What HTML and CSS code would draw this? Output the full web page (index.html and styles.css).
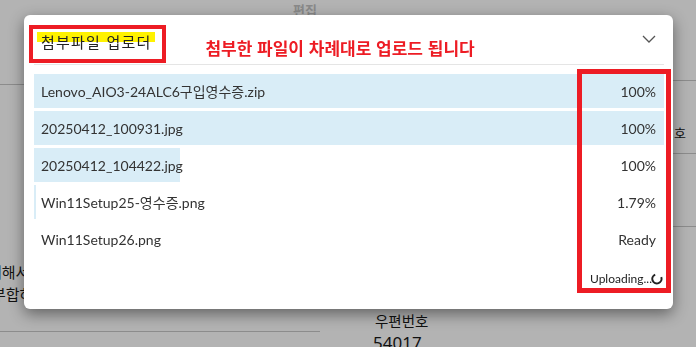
FILE: index.html
```html
<!DOCTYPE html>
<html lang="ko">
<head>
<meta charset="utf-8">
<title>첨부파일 업로더</title>
<link rel="stylesheet" href="styles.css">
</head>
<body>
<div class="page">
  <div class="col-left">
    <div class="edit-label">편집</div>
    <div class="rule rule-a"></div>
    <p class="para"><span class="l1">대해서 검토합니다</span><span class="l2">부합하는 경우</span></p>
    <div class="rule rule-b"></div>
  </div>
  <div class="col-right">
    <div class="bg-heading">구매 신청</div>
    <div class="rule rule-c"></div>
    <div class="phone-row">전화번호</div>
    <div class="rule rule-d"></div>
    <div class="rule rule-e"></div>
    <div class="zip-label">우편번호</div>
    <div class="zip-value">54017</div>
  </div>
</div>

<div class="modal">
  <div class="modal-header">
    <h4 class="modal-title"><span class="hl">첨부파일 업로더</span></h4>
    <span class="note">첨부한 파일이 차례대로 업로드 됩니다</span>
    <svg class="chevron" width="14" height="8" viewBox="0 0 14 8"><path d="M1 1 L7 7 L13 1" fill="none" stroke="#555" stroke-width="1.3"/></svg>
  </div>
  <div class="modal-body">
    <div class="row" style="--p:100%"><span class="name">Lenovo_AIO3-24ALC6구입영수증.zip</span><span class="status">100%</span></div>
    <div class="row" style="--p:100%"><span class="name">20250412_100931.jpg</span><span class="status">100%</span></div>
    <div class="row" style="--p:23.2%"><span class="name">20250412_104422.jpg</span><span class="status">100%</span></div>
    <div class="row" style="--p:0.32%"><span class="name">Win11Setup25-영수증.png</span><span class="status">1.79%</span></div>
    <div class="row" style="--p:0%"><span class="name">Win11Setup26.png</span><span class="status">Ready</span></div>
    <div class="row row-uploading" style="--p:0%"><span class="name"></span><span class="status uploading">Uploading...<svg class="spinner" width="12" height="12" viewBox="0 0 12 12"><path d="M4.2 1.6 A4.6 4.6 0 1 0 10.2 4.2" fill="none" stroke="#222" stroke-width="2"/></svg></span></div>
  </div>
  <div class="mark mark-title"></div>
  <div class="mark mark-status"></div>
</div>
</body>
</html>
```

FILE: styles.css
```css
html, body {
  margin: 0;
  padding: 0;
}
body {
  width: 696px;
  height: 347px;
  overflow: hidden;
  background: #b3b3b3;
  font-family: Lato, "Noto Sans CJK KR", sans-serif;
  color: #111;
}
.page {
  display: grid;
  grid-template-columns: 320px 53px 323px;
  height: 347px;
  overflow: hidden;
}
.col-left { grid-column: 1; }
.col-right { grid-column: 3; }

.rule { border-top: 1px solid #8c8c8c; height: 0; }

.edit-label {
  font-family: "Noto Sans CJK KR", sans-serif;
  font-size: 13px;
  font-weight: 700;
  line-height: 20px;
  color: #8a8a8a;
  text-align: right;
  padding-right: 3px;
}
.rule-a { margin-top: 64px; }
.para {
  margin: 176px 0 0 0;
  font-family: "Noto Sans CJK KR", sans-serif;
  font-size: 15px;
  line-height: 22px;
  white-space: nowrap;
}
.para span { display: block; }
.para .l1 { margin-left: -12px; }
.para .l2 { margin-left: -8px; }
.rule-b { margin-top: 26px; }

.bg-heading {
  margin-top: -28px;
  height: 30px;
  line-height: 30px;
  font-family: "Noto Sans CJK KR", sans-serif;
  font-size: 22px;
  font-weight: 700;
  white-space: nowrap;
}
.rule-c { margin-top: 78px; }
.phone-row {
  margin-top: 40px;
  height: 24px;
  line-height: 24px;
  font-family: "Noto Sans CJK KR", sans-serif;
  font-size: 13px;
  text-align: right;
  padding-right: 10px;
}
.rule-d { margin-top: 8px; }
.rule-e { margin-top: 72px; }
.zip-label {
  margin-top: 84px;
  padding-left: 2px;
  font-family: "Noto Sans CJK KR", sans-serif;
  font-size: 14.5px;
  line-height: 20px;
}
.zip-value {
  font-family: "Noto Sans", sans-serif;
  font-size: 17px;
  line-height: 24px;
}

/* modal */
.modal {
  position: fixed;
  left: 24px;
  top: 15px;
  width: 649px;
  height: 294px;
  box-sizing: border-box;
  padding: 0 9px 0 10px;
  background: #fff;
  border-radius: 6px;
  box-shadow: 0 5px 15px rgba(0, 0, 0, 0.45);
  color: #333;
}
.modal-header {
  display: flex;
  align-items: flex-start;
  height: 49px;
  border-bottom: 1px solid #e5e5e5;
}
.modal-title {
  margin: 17px 0 0 0;
  padding-left: 3px;
  font-family: "Noto Sans CJK KR", sans-serif;
  font-size: 15px;
  font-weight: 400;
  line-height: 20px;
  letter-spacing: 1.2px;
  color: #222;
}
.hl {
  padding: 0 4px 0 4px;
  background: linear-gradient(to bottom, transparent 1px, #fff200 1px, #fff200 11px, transparent 11px);
}
.note {
  margin: 23px 0 0 50px;
  font-family: "Noto Sans CJK KR", sans-serif;
  font-size: 17px;
  font-weight: 700;
  line-height: 20px;
  color: #ed1c24;
  white-space: nowrap;
}
.chevron {
  margin: 20px 8px 0 auto;
  display: block;
}
.modal-body {
  padding-top: 9px;
  display: flex;
  flex-direction: column;
  gap: 3px;
}
.row {
  height: 34px;
  display: flex;
  align-items: center;
  justify-content: space-between;
  padding: 0 8px 0 7px;
  font-size: 14px;
  color: #333;
  background: linear-gradient(to right, #d9edf7 var(--p), transparent var(--p));
}
.row-uploading { align-items: flex-start; padding-top: 12px; box-sizing: border-box; }
.uploading {
  font-size: 12px;
  color: #222;
  display: flex;
  align-items: center;
  margin-right: -7px;
}
.spinner { display: block; margin-left: -1px; }

/* annotation marks */
.mark {
  position: absolute;
  border: 4px solid #ed1c24;
  box-sizing: border-box;
  pointer-events: none;
}
.mark-title { left: 5px; top: 10px; width: 137px; height: 38px; }
.mark-status { left: 553px; top: 54px; width: 94px; height: 224px; border-width: 5px; }
```
